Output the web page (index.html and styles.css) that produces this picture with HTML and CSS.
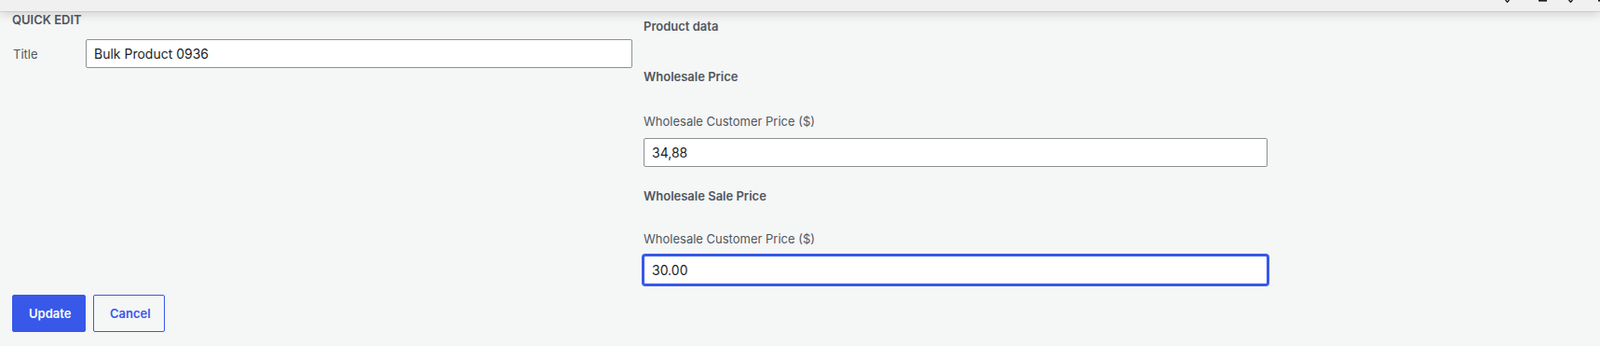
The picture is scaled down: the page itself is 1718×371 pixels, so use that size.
FILE: index.html
```html
<!DOCTYPE html>
<html lang="en">
<head>
<meta charset="utf-8">
<title>Quick Edit</title>
<link rel="stylesheet" href="styles.css">
</head>
<body>
<div class="topbar">
  <div class="topbar-icons">
    <svg class="tb-icon tb-1" width="6" height="3" viewBox="0 0 6 3"><path d="M0.5 0 L2.5 2.2 L4.5 0" fill="none" stroke="#1e1e1e" stroke-width="1.4"/></svg>
    <svg class="tb-icon tb-2" width="9" height="3" viewBox="0 0 9 3"><rect x="0" y="0" width="9" height="1.6" fill="#1e1e1e"/></svg>
    <svg class="tb-icon tb-3" width="6" height="3" viewBox="0 0 6 3"><path d="M0.5 0 L2.5 2.2 L4.5 0" fill="none" stroke="#1e1e1e" stroke-width="1.4"/></svg>
    <svg class="tb-icon tb-4" width="2" height="3" viewBox="0 0 2 3"><rect x="0" y="0" width="2" height="1.6" fill="#1e1e1e"/></svg>
  </div>
</div>
<form class="quick-edit">
  <div class="columns">
    <fieldset class="col-left">
      <h4 class="qe-title">QUICK EDIT</h4>
      <label class="title-row">
        <span class="row-label">Title</span>
        <input class="text-input" type="text" value="Bulk Product 0936">
      </label>
    </fieldset>
    <fieldset class="col-right">
      <h4 class="section-heading product-data">Product data</h4>
      <h4 class="section-heading price-heading">Wholesale Price</h4>
      <label class="field">
        <span class="field-label">Wholesale Customer Price ($)</span>
        <input class="text-input" type="text" value="34,88">
      </label>
      <h4 class="section-heading sale-heading">Wholesale Sale Price</h4>
      <label class="field field-sale">
        <span class="field-label">Wholesale Customer Price ($)</span>
        <input class="text-input is-focused" type="text" value="30.00">
      </label>
    </fieldset>
  </div>
  <div class="submit-row">
    <button type="button" class="btn btn-primary">Update</button>
    <button type="button" class="btn btn-secondary">Cancel</button>
  </div>
</form>
</body>
</html>
```
FILE: styles.css
```css
* {
  box-sizing: border-box;
}

body {
  margin: 0;
  background: #f5f6f6;
  font-family: Inter, "Noto Sans", "Liberation Sans", sans-serif;
  color: #50575e;
  height: 371px;
  overflow: hidden;
}

.topbar {
  height: 12px;
  background: #f0f0f0;
  position: relative;
  z-index: 1;
  box-shadow: 0 1px 0 rgba(0, 0, 0, 0.08), 0 3px 12px rgba(0, 0, 0, 0.16);
  display: flex;
  justify-content: flex-end;
  align-items: flex-start;
}

.topbar-icons {
  display: flex;
  align-items: flex-start;
}

.tb-icon {
  display: block;
}

.tb-2 {
  margin-left: 30px;
}

.tb-3 {
  margin-left: 23px;
}

.tb-4 {
  margin-left: 26px;
}

.quick-edit {
  padding: 0 0 0 13px;
}

.columns {
  display: flex;
  align-items: flex-start;
}

fieldset {
  border: 0;
  margin: 0;
  padding: 0;
  min-width: 0;
}

.col-left {
  width: 666px;
}

.col-right {
  width: 670px;
  margin-left: 12px;
}

h4 {
  margin: 0;
  font-size: 13px;
  line-height: 18px;
  font-weight: 600;
  color: #50575e;
}

.qe-title {
  color: #50575e;
}

.title-row {
  display: flex;
  align-items: center;
  margin-top: 12px;
}

.row-label {
  width: 79px;
  flex: none;
  font-size: 13px;
  line-height: 18px;
  padding-left: 1px;
}

.text-input {
  display: block;
  width: 100%;
  height: 31px;
  margin: 0;
  padding: 0 8px;
  border: 1px solid #8c8f94;
  border-radius: 2px;
  background: #ffffff;
  font-family: Inter, "Noto Sans", "Liberation Sans", sans-serif;
  font-size: 14px;
  color: #1e1e1e;
  outline: none;
}

.title-row .text-input {
  flex: 1;
}

.text-input.is-focused {
  border-color: #3858e9;
  box-shadow: 0 0 0 2px #3858e9;
}

.product-data {
  margin-top: 7px;
}

.price-heading {
  margin-top: 36px;
}

.field {
  display: block;
  margin-top: 30px;
}

.field-label {
  display: block;
  font-size: 13px;
  line-height: 18px;
  margin-bottom: 9px;
}

.sale-heading {
  margin-top: 22px;
}

.field-sale {
  margin-top: 28px;
}

.submit-row {
  display: flex;
  gap: 8px;
  margin-top: 11px;
}

.btn {
  height: 40px;
  padding: 0 17px;
  border-radius: 2px;
  font-family: Inter, "Noto Sans", "Liberation Sans", sans-serif;
  font-size: 13px;
  font-weight: 600;
  line-height: 1;
  cursor: pointer;
}

.btn-primary {
  background: #3858e9;
  border: 1px solid #3858e9;
  color: #ffffff;
  width: 79px;
}

.btn-secondary {
  background: transparent;
  border: 1px solid #3858e9;
  color: #3858e9;
  width: 77px;
}
```
